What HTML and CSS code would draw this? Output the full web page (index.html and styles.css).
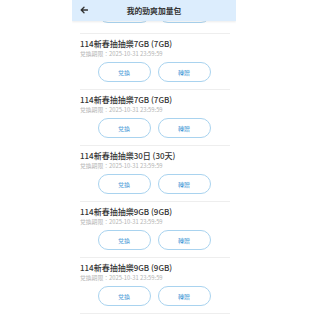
FILE: index.html
```html
<!DOCTYPE html>
<html lang="zh-Hant">
<head>
<meta charset="utf-8">
<link rel="stylesheet" href="styles.css">
</head>
<body>
<div class="phone">
  <header class="topbar">
    <svg class="back" width="8" height="8" viewBox="0 0 8 8"><path d="M7.5 4H1.2M4 1.2L1.2 4 4 6.8" fill="none" stroke="#333" stroke-width="1.3" stroke-linecap="round" stroke-linejoin="round"/></svg>
    <span class="title">我的勁爽加量包</span>
  </header>
  <ul class="list">
    <li class="peek"><div class="btns"><span class="btn"></span><span class="btn"></span></div></li>
    <li class="item"><div class="name">114新春抽抽樂7GB (7GB)</div><div class="date">兌換期限：2025-10-31 23:59:59</div><div class="btns"><span class="btn">兌換</span><span class="btn">轉贈</span></div></li>
    <li class="item"><div class="name">114新春抽抽樂7GB (7GB)</div><div class="date">兌換期限：2025-10-31 23:59:59</div><div class="btns"><span class="btn">兌換</span><span class="btn">轉贈</span></div></li>
    <li class="item"><div class="name">114新春抽抽樂30日 (30天)</div><div class="date">兌換期限：2025-10-31 23:59:59</div><div class="btns"><span class="btn">兌換</span><span class="btn">轉贈</span></div></li>
    <li class="item"><div class="name">114新春抽抽樂9GB (9GB)</div><div class="date">兌換期限：2025-10-31 23:59:59</div><div class="btns"><span class="btn">兌換</span><span class="btn">轉贈</span></div></li>
    <li class="item"><div class="name">114新春抽抽樂9GB (9GB)</div><div class="date">兌換期限：2025-10-31 23:59:59</div><div class="btns"><span class="btn">兌換</span><span class="btn">轉贈</span></div></li>
    <li class="item"></li>
  </ul>
</div>
</body>
</html>
```
FILE: styles.css
```css
html, body {
  margin: 0;
  padding: 0;
  background: #fff;
  width: 320px;
  height: 320px;
  overflow: hidden;
}
body {
  font-family: "Noto Sans CJK TC", "Noto Sans", sans-serif;
  color: #333;
}
.phone {
  position: relative;
  width: 164px;
  margin-left: 72px;
  height: 320px;
  overflow: hidden;
}
.topbar {
  position: absolute;
  top: 0;
  left: 0;
  right: 0;
  height: 21px;
  background: #dcedfd;
  box-shadow: 0 1px 2px rgba(0, 0, 0, 0.08);
  display: flex;
  align-items: center;
  justify-content: center;
  z-index: 2;
}
.back {
  position: absolute;
  left: 8px;
  top: 6px;
}
.title {
  font-size: 7.8px;
  font-weight: 700;
  color: #333;
  line-height: 10px;
}
.list {
  list-style: none;
  margin: 0;
  padding: 0 6px 0 8px;
}
.peek {
  padding: 3px 0 10px 0;
}
.peek .btns {
  margin-top: 0;
}
.item {
  border-top: 1px solid #eeeeee;
  padding: 4px 0 7px 0;
  height: 44px;
}
.name {
  font-size: 8px;
  font-weight: 500;
  line-height: 12px;
  color: #333;
  white-space: nowrap;
}
.date {
  font-size: 5.8px;
  line-height: 8px;
  color: #b4b4b4;
  white-space: nowrap;
}
.btns {
  margin-top: 4px;
  display: flex;
  justify-content: center;
  gap: 7px;
  padding-right: 2px;
}
.btn {
  box-sizing: border-box;
  width: 53px;
  height: 20px;
  border: 1px solid #a9d3ef;
  border-radius: 10px;
  display: flex;
  align-items: center;
  justify-content: center;
  font-size: 6px;
  color: #4598d6;
  background: #fff;
}
```
